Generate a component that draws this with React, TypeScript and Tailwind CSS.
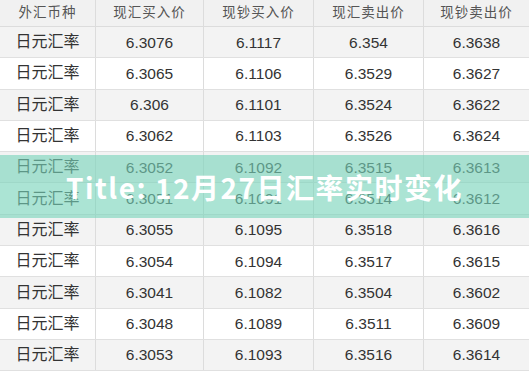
import React from "react";

const headers = ["外汇币种", "现汇买入价", "现钞买入价", "现汇卖出价", "现钞卖出价"];

const rows: string[][] = [
  ["6.3076", "6.1117", "6.354", "6.3638"],
  ["6.3065", "6.1106", "6.3529", "6.3627"],
  ["6.306", "6.1101", "6.3524", "6.3622"],
  ["6.3062", "6.1103", "6.3526", "6.3624"],
  ["6.3052", "6.1092", "6.3515", "6.3613"],
  ["6.3051", "6.1091", "6.3514", "6.3612"],
  ["6.3055", "6.1095", "6.3518", "6.3616"],
  ["6.3054", "6.1094", "6.3517", "6.3615"],
  ["6.3041", "6.1082", "6.3504", "6.3602"],
  ["6.3048", "6.1089", "6.3511", "6.3609"],
  ["6.3053", "6.1093", "6.3516", "6.3614"],
];

const cols = "grid grid-cols-[96px_108px_110px_110px_105px]";

const App: React.FC = () => {
  return (
    <div
      className="relative w-[529px] h-[371px] overflow-hidden bg-white text-[#333]"
      style={{ fontFamily: '"Liberation Sans", "Noto Sans CJK SC", sans-serif' }}
    >
      {/* header */}
      <div className={`${cols} h-[27px] bg-[#f1f1f1] border-b border-[#dcdcdc]`}>
        {headers.map((h, i) => (
          <div
            key={h}
            className={`flex items-center justify-center text-[13.5px] tracking-[1px] text-[#555] ${
              i < 4 ? "border-r border-[#dcdcdc]" : ""
            }`}
          >
            {h}
          </div>
        ))}
      </div>

      {rows.map((r, idx) => (
        <div
          key={idx}
          className={`${cols} h-[31.3px] border-b border-[#e0e0e0] ${
            idx % 2 === 0 ? "bg-[#f3f3f3]" : "bg-white"
          }`}
        >
          <div className="flex items-center justify-center text-[16px] text-[#333] border-r border-[#dcdcdc]">
            日元汇率
          </div>
          {r.map((v, i) => (
            <div
              key={i}
              className={`flex items-center justify-center text-[15.5px] ${
                i < 3 ? "border-r border-[#dcdcdc]" : ""
              }`}
            >
              {v}
            </div>
          ))}
        </div>
      ))}

      {/* title banner over the table */}
      <div className="absolute left-0 right-0 top-[155px] h-[63px] bg-[rgba(120,212,186,0.62)] flex items-center justify-center">
        <span
          className="text-white font-bold text-[28px] tracking-[1.5px]"
          style={{ fontFamily: '"Noto Sans CJK SC", "Noto Sans", sans-serif' }}
        >
          Title: 12月27日汇率实时变化
        </span>
      </div>
    </div>
  );
};

export default App;
